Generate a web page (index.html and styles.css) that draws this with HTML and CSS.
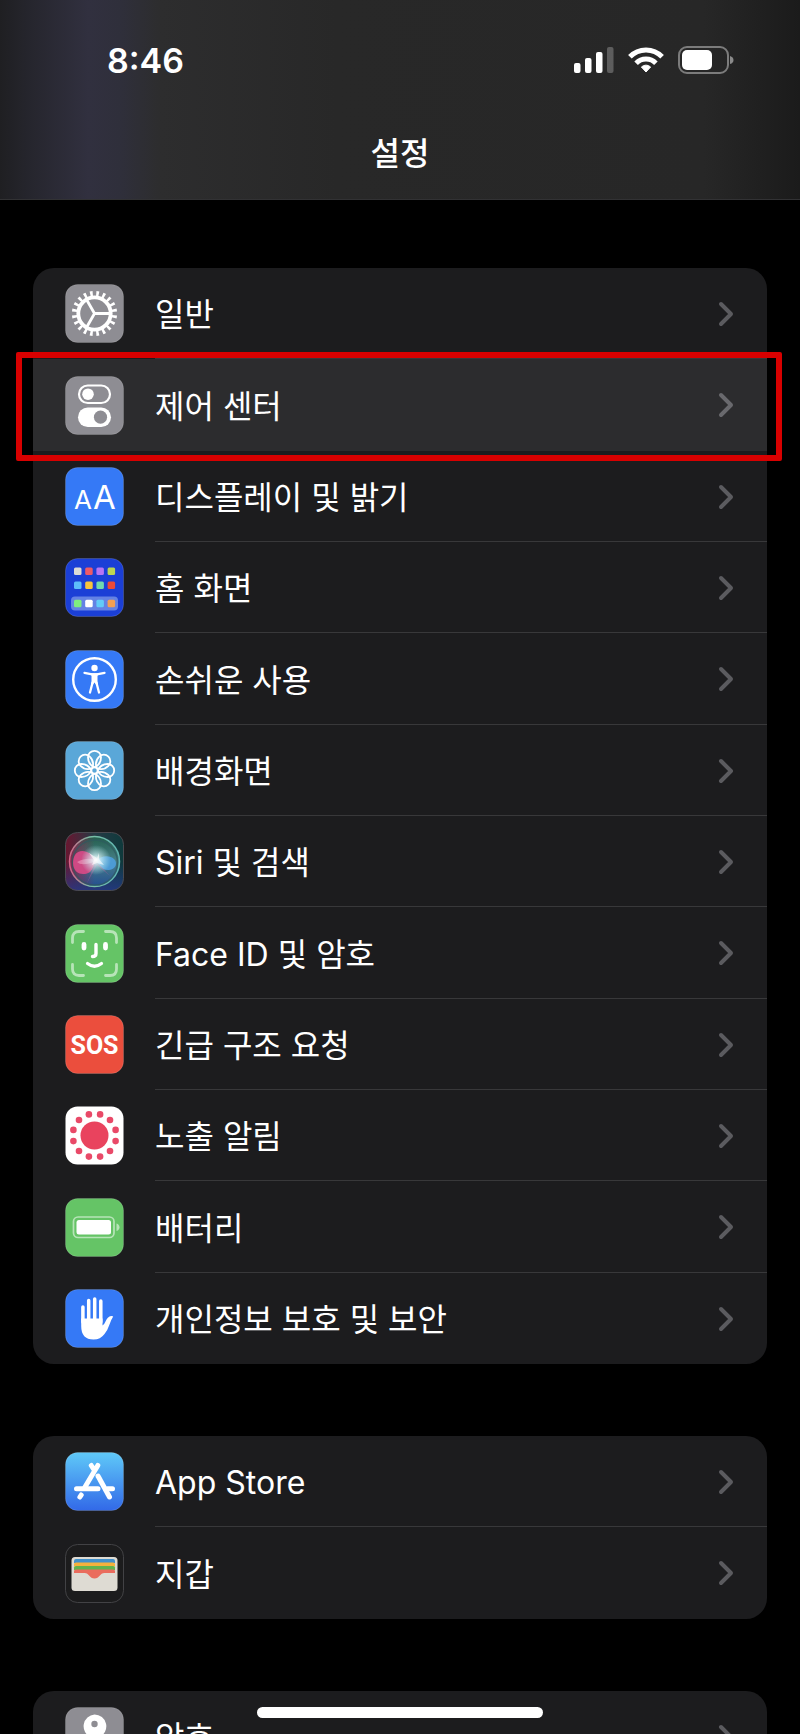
FILE: index.html
```html
<!DOCTYPE html>
<html lang="ko">
<head>
    <meta charset="UTF-8">
    <meta name="viewport" content="width=device-width, initial-scale=1.0">
    <title>설정</title>
    <link rel="stylesheet" href="styles.css">
</head>
<body>

<header>
    <div class="status-bar">
        <span class="time">8:46</span>
        <div class="status-icons">
            <svg class="signal" width="40" height="26" viewBox="0 0 40 26" fill="#fff">
                <rect x="0" y="16" width="6.500" height="10" rx="2"/>
                <rect x="11" y="11" width="6.500" height="15" rx="2"/>
                <rect x="22" y="5" width="6.500" height="21" rx="2"/>
                <rect x="33" y="0" width="6.500" height="26" rx="2" opacity=".25"/>
            </svg>
            <svg class="wifi" width="36" height="26" viewBox="0 0 36 26" fill="none" stroke="#fff" stroke-width="5">
                <path d="M1.9 9.8A22.3 22.3 0 0 1 34.1 9.8"/>
                <path d="M8.1 16.2A14 14 0 0 1 27.9 16.2"/>
                <path d="M18 25l-4.6-5a6.6 6.6 0 0 1 9.2 0z" fill="#fff" stroke-width="1" stroke-linejoin="round"/>
            </svg>
            <svg class="battery" width="56" height="28" viewBox="0 0 56 28">
                <rect x="1" y="1" width="49" height="26" rx="8" fill="none" stroke="#7c7c7c" stroke-width="2"/>
                <rect x="4" y="4" width="30" height="20" rx="5" fill="#fff"/>
                <path d="M52 10q3.500 1 3.500 4t-3.500 4z" fill="#8a8a8a"/>
            </svg>
        </div>
    </div>
    <h1>설정</h1>
</header>

<main>
    <ul class="group">
        <li>
            <a href="#" class="row">
                <svg class="icon" viewBox="0 0 59 59">
                    <rect class="tile" x=".5" y=".5" width="58" height="58" rx="12" fill="#8e8d93"/>
                    <g fill="none" stroke="#fff">
                        <circle cx="29.500" cy="29.500" r="16.200" stroke-width="3.800"/>
                        <circle cx="29.500" cy="29.500" r="20" stroke-width="5.200" pathLength="400" stroke-dasharray="8.400 11.600" stroke-dashoffset="-5.800"/>
                        <path d="M29.500 29.500H45M29.500 29.500L21.500 15.500M29.500 29.500L21.500 43.500" stroke-width="2.800"/>
                    </g>
                </svg>
                <span class="label">일반</span>
                <svg class="chevron" viewBox="0 0 16 26"><path d="M3 3l10 10L3 23"/></svg>
            </a>
        </li>
        <li class="selected">
            <a href="#" class="row">
                <svg class="icon" viewBox="0 0 59 59">
                    <rect class="tile" x=".5" y=".5" width="58" height="58" rx="12" fill="#8e8d93"/>
                    <rect x="14" y="9.500" width="31" height="17.500" rx="8.750" fill="none" stroke="#fff" stroke-width="2.200"/>
                    <circle cx="23" cy="18.200" r="5.800" fill="#fff"/>
                    <rect x="13" y="31.500" width="33" height="19.500" rx="9.750" fill="#fff"/>
                    <circle cx="35.500" cy="41.200" r="6.600" fill="#8e8d93"/>
                </svg>
                <span class="label">제어 센터</span>
                <svg class="chevron" viewBox="0 0 16 26"><path d="M3 3l10 10L3 23"/></svg>
            </a>
        </li>
        <li>
            <a href="#" class="row">
                <svg class="icon" viewBox="0 0 59 59">
                    <rect class="tile" x=".5" y=".5" width="58" height="58" rx="12" fill="#3579f6"/>
                    <text x="9" y="42" font-size="26" class="aa">A</text>
                    <text x="28" y="42" font-size="33" class="aa">A</text>
                </svg>
                <span class="label">디스플레이 및 밝기</span>
                <svg class="chevron" viewBox="0 0 16 26"><path d="M3 3l10 10L3 23"/></svg>
            </a>
        </li>
        <li>
            <a href="#" class="row">
                <svg class="icon" viewBox="0 0 59 59">
                    <rect class="tile" x=".5" y=".5" width="58" height="58" rx="12" fill="#1b3fd6"/>
                    <rect x="6" y="38.500" width="47" height="14" rx="4" fill="#6482e4"/>
                    <rect x="9" y="9.500" width="7.500" height="7.500" rx="1.500" fill="#dcdad6"/>
                    <rect x="20.200" y="9.500" width="7.500" height="7.500" rx="1.500" fill="#ee5a66"/>
                    <rect x="31.400" y="9.500" width="7.500" height="7.500" rx="1.500" fill="#b774f4"/>
                    <rect x="42.600" y="9.500" width="7.500" height="7.500" rx="1.500" fill="#bcd651"/>
                    <rect x="9" y="23.500" width="7.500" height="7.500" rx="1.500" fill="#5dbdfa"/>
                    <rect x="20.200" y="23.500" width="7.500" height="7.500" rx="1.500" fill="#f8c43c"/>
                    <rect x="31.400" y="23.500" width="7.500" height="7.500" rx="1.500" fill="#70d9ad"/>
                    <rect x="42.600" y="23.500" width="7.500" height="7.500" rx="1.500" fill="#ec4a38"/>
                    <rect x="9" y="41.800" width="7.500" height="7.500" rx="1.500" fill="#7fee7f"/>
                    <rect x="20.200" y="41.800" width="7.500" height="7.500" rx="1.500" fill="#fff"/>
                    <rect x="31.400" y="41.800" width="7.500" height="7.500" rx="1.500" fill="#62cbf8"/>
                    <rect x="42.600" y="41.800" width="7.500" height="7.500" rx="1.500" fill="#f3a054"/>
                </svg>
                <span class="label">홈 화면</span>
                <svg class="chevron" viewBox="0 0 16 26"><path d="M3 3l10 10L3 23"/></svg>
            </a>
        </li>
        <li>
            <a href="#" class="row">
                <svg class="icon" viewBox="0 0 59 59">
                    <rect class="tile" x=".5" y=".5" width="58" height="58" rx="12" fill="#3579f6"/>
                    <circle cx="29.500" cy="29.500" r="21.300" fill="none" stroke="#fff" stroke-width="2.400"/>
                    <circle cx="29.500" cy="18" r="3.200" fill="#fff"/>
                    <path d="M19.500 22.800L27 24.300H32L39.500 22.800M27.600 32.500L25 42.500M31.400 32.500L34 42.500" fill="none" stroke="#fff" stroke-width="2.300" stroke-linecap="round"/>
                    <path d="M25.500 23.300H33.500L32.500 26V31.500L33 34.500H31L29.500 32.500L28 34.500H26L26.500 31.500V26z" fill="#fff"/>
                </svg>
                <span class="label">손쉬운 사용</span>
                <svg class="chevron" viewBox="0 0 16 26"><path d="M3 3l10 10L3 23"/></svg>
            </a>
        </li>
        <li>
            <a href="#" class="row">
                <svg class="icon" viewBox="0 0 59 59">
                    <defs><path id="petal" d="M29.500 26.300C25.500 24.500 23 20.500 23 16.300a6.500 6.500 0 0 1 13 0C36 20.500 33.500 24.500 29.500 26.300z"/></defs>
                    <rect class="tile" x=".5" y=".5" width="58" height="58" rx="12" fill="#5aa7d8"/>
                    <g fill="none" stroke="#fff" stroke-width="1.800">
                        <use href="#petal"/>
                        <use href="#petal" transform="rotate(45 29.500 29.500)"/>
                        <use href="#petal" transform="rotate(90 29.500 29.500)"/>
                        <use href="#petal" transform="rotate(135 29.500 29.500)"/>
                        <use href="#petal" transform="rotate(180 29.500 29.500)"/>
                        <use href="#petal" transform="rotate(225 29.500 29.500)"/>
                        <use href="#petal" transform="rotate(270 29.500 29.500)"/>
                        <use href="#petal" transform="rotate(315 29.500 29.500)"/>
                        <circle cx="29.500" cy="29.500" r="3.200"/>
                    </g>
                </svg>
                <span class="label">배경화면</span>
                <svg class="chevron" viewBox="0 0 16 26"><path d="M3 3l10 10L3 23"/></svg>
            </a>
        </li>
        <li>
            <a href="#" class="row">
                <svg class="icon" viewBox="0 0 59 59">
                    <defs>
                        <linearGradient id="siriBg" x1="0" y1="0" x2="1" y2="0">
                            <stop offset="0" stop-color="#6a1630"/>
                            <stop offset=".5" stop-color="#263a45"/>
                            <stop offset="1" stop-color="#0e3a3c"/>
                        </linearGradient>
                        <linearGradient id="siriLow" x1="0" y1="0" x2="0" y2="1">
                            <stop offset=".5" stop-color="#203a88" stop-opacity="0"/>
                            <stop offset="1" stop-color="#25388c" stop-opacity=".8"/>
                        </linearGradient>
                        <linearGradient id="siriOrb" x1="0" y1="0" x2="0" y2="1">
                            <stop offset="0" stop-color="#245f4c"/>
                            <stop offset=".5" stop-color="#477f88"/>
                            <stop offset="1" stop-color="#244e90"/>
                        </linearGradient>
                        <linearGradient id="siriRed" x1="0" y1="0" x2="1" y2="0">
                            <stop offset="0" stop-color="#8a2048" stop-opacity=".9"/>
                            <stop offset=".5" stop-color="#8a2048" stop-opacity="0"/>
                        </linearGradient>
                        <linearGradient id="siriRing" x1="0" y1="0" x2="1" y2="0">
                            <stop offset="0" stop-color="#d46288"/>
                            <stop offset=".4" stop-color="#7bbfa5"/>
                            <stop offset="1" stop-color="#5fb6b4"/>
                        </linearGradient>
                        <radialGradient id="siriGlow">
                            <stop offset="0" stop-color="#fff"/>
                            <stop offset=".25" stop-color="#e8ffff" stop-opacity=".75"/>
                            <stop offset="1" stop-color="#b8f0f0" stop-opacity="0"/>
                        </radialGradient>
                    </defs>
                    <rect x=".5" y=".5" width="58" height="58" rx="12" fill="url(#siriBg)"/>
                    <rect x=".5" y=".5" width="58" height="58" rx="12" fill="url(#siriLow)" stroke="#4a4a50"/>
                    <circle cx="29.500" cy="29.500" r="25" fill="url(#siriOrb)"/>
                    <circle cx="29.500" cy="29.500" r="25" fill="url(#siriRed)" stroke="url(#siriRing)" stroke-width="1.500"/>
                    <circle cx="30" cy="30.500" r="22.500" fill="none" stroke="#2d5a60" stroke-width="1.500" opacity=".7"/>
                    <path d="M31 29C26 18 14 16 10 23S8 42 18 42S28 34 31 29z" fill="#d44a86" opacity=".95"/>
                    <path d="M31 29C27 26 20 26 12 30Q17 35 31 29z" fill="#eda0c0" opacity=".6"/>
                    <path d="M31 29C36 23 45 23 49 27S51 37 44 38S35 33 31 29z" fill="#4e9fdd" opacity=".9"/>
                    <path d="M31 29L45 44L32 33L22 51z" fill="#a45d9c" opacity=".5"/>
                    <circle cx="31" cy="28" r="15" fill="url(#siriGlow)"/>
                    <path d="M24 21L32 26L34 21L34 27L39 33L32 31L27 33L29 28z" fill="#fff" opacity=".6"/>
                </svg>
                <span class="label">Siri 및 검색</span>
                <svg class="chevron" viewBox="0 0 16 26"><path d="M3 3l10 10L3 23"/></svg>
            </a>
        </li>
        <li>
            <a href="#" class="row">
                <svg class="icon" viewBox="0 0 59 59">
                    <rect class="tile" x=".5" y=".5" width="58" height="58" rx="12" fill="#65c466"/>
                    <path d="M7.500 18.500V14Q7.500 7.500 14 7.500H18.500M40.500 7.500H45Q51.500 7.500 51.500 14V18.500M51.500 40.500V45Q51.500 51.500 45 51.500H40.500M18.500 51.500H14Q7.500 51.500 7.500 45V40.500" fill="none" stroke="#b7e4b8" stroke-width="2.800" stroke-linecap="round"/>
                    <g fill="none" stroke="#fff" stroke-linecap="round">
                        <path d="M19 20.500V24M40.500 20.500V24" stroke-width="4.800"/>
                        <path d="M31 20.500V29.500Q31 32.500 27.500 32.500" stroke-width="3.400"/>
                        <path d="M22.500 39.500Q29.500 45 36.500 39.500" stroke-width="3.200"/>
                    </g>
                </svg>
                <span class="label">Face ID 및 암호</span>
                <svg class="chevron" viewBox="0 0 16 26"><path d="M3 3l10 10L3 23"/></svg>
            </a>
        </li>
        <li>
            <a href="#" class="row">
                <svg class="icon" viewBox="0 0 59 59">
                    <rect class="tile" x=".5" y=".5" width="58" height="58" rx="12" fill="#eb4e3d"/>
                    <text x="29.500" y="39" class="sos">SOS</text>
                </svg>
                <span class="label">긴급 구조 요청</span>
                <svg class="chevron" viewBox="0 0 16 26"><path d="M3 3l10 10L3 23"/></svg>
            </a>
        </li>
        <li>
            <a href="#" class="row">
                <svg class="icon" viewBox="0 0 59 59">
                    <rect x=".5" y=".5" width="58" height="58" rx="12" fill="#fff"/>
                    <circle cx="29.500" cy="29.500" r="14" fill="#e9435e"/>
                    <g fill="#e94968">
                        <circle cx="35.100" cy="8.400" r="3.300"/>
                        <circle cx="45" cy="14" r="3.300"/>
                        <circle cx="50.600" cy="23.900" r="3.300"/>
                        <circle cx="50.600" cy="35.100" r="3.300"/>
                        <circle cx="45" cy="45" r="3.300"/>
                        <circle cx="35.100" cy="50.600" r="3.300"/>
                        <circle cx="23.900" cy="50.600" r="3.300"/>
                        <circle cx="14" cy="45" r="3.300"/>
                        <circle cx="8.400" cy="35.100" r="3.300"/>
                        <circle cx="8.400" cy="23.900" r="3.300"/>
                        <circle cx="14" cy="14" r="3.300"/>
                        <circle cx="23.900" cy="8.400" r="3.300"/>
                    </g>
                </svg>
                <span class="label">노출 알림</span>
                <svg class="chevron" viewBox="0 0 16 26"><path d="M3 3l10 10L3 23"/></svg>
            </a>
        </li>
        <li>
            <a href="#" class="row">
                <svg class="icon" viewBox="0 0 59 59">
                    <rect class="tile" x=".5" y=".5" width="58" height="58" rx="12" fill="#65c466"/>
                    <rect x="8.500" y="19" width="40.500" height="20.500" rx="4.500" fill="none" stroke="#b7e4b8" stroke-width="1.700"/>
                    <rect x="11.500" y="22" width="34.500" height="14.500" rx="2.500" fill="#fff"/>
                    <path d="M51.500 25.500q3 1 3 3.800t-3 3.800z" fill="#b7e4b8"/>
                </svg>
                <span class="label">배터리</span>
                <svg class="chevron" viewBox="0 0 16 26"><path d="M3 3l10 10L3 23"/></svg>
            </a>
        </li>
        <li>
            <a href="#" class="row">
                <svg class="icon" viewBox="0 0 59 59">
                    <rect class="tile" x=".5" y=".5" width="58" height="58" rx="12" fill="#3579f6"/>
                    <path d="M17.900 18V33M23.700 11.500V33M29.700 10V33M35.800 12V33" fill="none" stroke="#fff" stroke-width="3.500" stroke-linecap="round"/>
                    <path d="M16.200 29.500H37.500V36.500Q39 36 40.500 32.500Q42.500 28 45 27.200Q47.500 26.500 48.200 27.600Q46 31 44.500 35.500Q42.500 41.500 39.500 45Q35.500 50.500 28.500 50.500Q16.200 50.500 16.200 37z" fill="#fff"/>
                </svg>
                <span class="label">개인정보 보호 및 보안</span>
                <svg class="chevron" viewBox="0 0 16 26"><path d="M3 3l10 10L3 23"/></svg>
            </a>
        </li>
    </ul>

    <ul class="group">
        <li>
            <a href="#" class="row">
                <svg class="icon" viewBox="0 0 59 59">
                    <defs>
                        <linearGradient id="storeBg" x1="0" y1="0" x2="0" y2="1">
                            <stop offset="0" stop-color="#5fc9f8"/>
                            <stop offset="1" stop-color="#3269e8"/>
                        </linearGradient>
                    </defs>
                    <rect class="tile" x=".5" y=".5" width="58" height="58" rx="12" fill="url(#storeBg)"/>
                    <g fill="none" stroke="#fff" stroke-width="5" stroke-linecap="round">
                        <path d="M26.300 13.500L29.500 18.500M32.800 13.500L20 35"/>
                        <path d="M33 24L44.500 45"/>
                        <path d="M11.500 36.800H33M42.500 36.800H47.500M16.200 43L14.900 45"/>
                    </g>
                </svg>
                <span class="label">App Store</span>
                <svg class="chevron" viewBox="0 0 16 26"><path d="M3 3l10 10L3 23"/></svg>
            </a>
        </li>
        <li>
            <a href="#" class="row">
                <svg class="icon" viewBox="0 0 59 59">
                    <rect x=".5" y=".5" width="58" height="58" rx="12" fill="#1c1c1d" stroke="#424245"/>
                    <rect x="6.500" y="13" width="46" height="34" rx="3.500" fill="#dedbd3"/>
                    <path d="M9 19V17Q9 15 11 15H48Q50 15 50 17V19z" fill="#4291cb"/>
                    <path d="M9 22.500V20Q9 18.500 11 18.500H48Q50 18.500 50 20V22.500z" fill="#f5b13c"/>
                    <path d="M9 26V23.500Q9 22 11 22H48Q50 22 50 23.500V26z" fill="#62b34d"/>
                    <path d="M9 29V27Q9 25.500 11 25.500H48Q50 25.500 50 27V29H39.500C35 29 34.500 34.500 29.500 34.500S24 29 19.500 29z" fill="#ea6c5d"/>
                </svg>
                <span class="label">지갑</span>
                <svg class="chevron" viewBox="0 0 16 26"><path d="M3 3l10 10L3 23"/></svg>
            </a>
        </li>
    </ul>

    <ul class="group">
        <li>
            <a href="#" class="row">
                <svg class="icon" viewBox="0 0 59 59">
                    <rect class="tile" x=".5" y=".5" width="58" height="58" rx="12" fill="#8e8d93"/>
                    <path d="M29.500 7.500a11.800 11.800 0 0 1 5 22.500V34l-3 3 3 3-3 4 2 2-4 5-4-4V30a11.800 11.800 0 0 1 4-22.500z" fill="#fff"/>
                    <circle cx="29.500" cy="17" r="3.200" fill="#8e8d93"/>
                </svg>
                <span class="label">암호</span>
                <svg class="chevron" viewBox="0 0 16 26"><path d="M3 3l10 10L3 23"/></svg>
            </a>
        </li>
    </ul>
</main>

<div class="home-indicator"></div>

</body>
</html>
```

FILE: styles.css
```css
* {
    box-sizing: border-box;
}
body {
    font-family: Inter, 'Noto Sans CJK KR', sans-serif;
    background-color: #000;
    color: #fff;
    margin: 0;
    height: 100vh;
    overflow: hidden;
}

/* Шапка */
header {
    background: linear-gradient(to right, #1f1f22 0%, #26262e 4%, #31303f 11%, #2f2f3b 15%, #2d2d2e 20%, #282828 42%, #272727 88%, #1b1b1b 100%);
    border-bottom: 1px solid #323234;
    padding-bottom: 11px;
}
.status-bar {
    display: flex;
    justify-content: space-between;
    align-items: center;
    height: 120px;
    padding: 0 66px 0 107px;
}
.time {
    font-size: 34px;
    font-weight: 600;
}
.status-icons {
    display: flex;
    align-items: center;
    gap: 14px;
}
header h1 {
    margin: 0;
    font-size: 32px;
    font-weight: 500;
    line-height: 68px;
    text-align: center;
}

/* Списки настроек */
main {
    padding: 68px 33px 0;
}
.group {
    list-style: none;
    margin: 0 0 72px;
    padding: 0;
    background-color: #1c1c1e;
    border-radius: 21px;
}
.group li {
    position: relative;
}
.row {
    display: flex;
    align-items: center;
    height: 91px;
    padding-left: 32px;
    color: #fff;
    text-decoration: none;
}
.group li:nth-child(3n+2) .row {
    height: 92px;
}
.icon {
    flex: none;
    width: 59px;
    height: 59px;
    margin-right: 31px;
}
.tile {
    stroke: rgba(255, 255, 255, 0.15);
}
.label {
    flex: 1;
    padding-top: 3px;
    font-size: 32px;
    line-height: 48px;
}
.chevron {
    flex: none;
    width: 16px;
    height: 26px;
    margin-right: 33px;
    fill: none;
    stroke: #5b5b5f;
    stroke-width: 4;
    stroke-linecap: round;
    stroke-linejoin: round;
}

/* Разделители */
.group li:not(:last-child):not(.selected)::after {
    content: "";
    position: absolute;
    left: 122px;
    right: 0;
    bottom: 0;
    height: 1px;
    background-color: #38383a;
}

/* Выделенный пункт */
.selected .row {
    background-color: #2c2c2e;
}
.selected::before {
    content: "";
    position: absolute;
    top: -7px;
    right: -15px;
    bottom: -10px;
    left: -17px;
    border: 6px solid #d80000;
    border-radius: 2px;
    z-index: 1;
    pointer-events: none;
}
.selected .chevron {
    stroke: #69696d;
}

/* Текст внутри иконок */
.aa {
    fill: #fff;
    font-family: Inter, sans-serif;
    font-weight: 400;
}
.sos {
    fill: #fff;
    font-family: Roboto, sans-serif;
    font-size: 25px;
    font-weight: bold;
    text-anchor: middle;
}

.home-indicator {
    position: fixed;
    bottom: 16px;
    left: 50%;
    width: 286px;
    height: 11px;
    margin-left: -143px;
    border-radius: 6px;
    background-color: #fff;
}
```
